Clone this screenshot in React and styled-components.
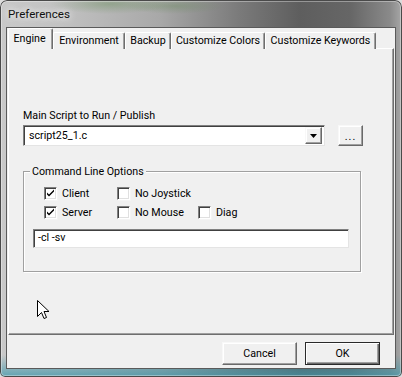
import React from "react";
import styled, { createGlobalStyle } from "styled-components";

const Global = createGlobalStyle`
  html, body { margin: 0; padding: 0; background: #dcdcdc; }
  body { font-family: Roboto, "Noto Sans", sans-serif; font-size: 10.7px; color: #000; }
  * { box-sizing: border-box; }
`;

const Window = styled.div`
  position: relative;
  width: 402px;
  height: 377px;
  padding: 27px 6px 8px 6px;
  display: flex;
  flex-direction: column;
  border-radius: 7px 7px 5px 5px;
  overflow: hidden;
  background:
    radial-gradient(ellipse 60px 10px at 110px 4px, rgba(120, 150, 110, 0.55), rgba(120,150,110,0) 100%),
    radial-gradient(ellipse 50px 8px at 175px 6px, rgba(110, 140, 100, 0.45), rgba(110,140,100,0) 100%),
    linear-gradient(to bottom, rgba(60,150,170,0) 0, rgba(60,150,170,0) 355px, rgba(60,150,170,0.75) 377px),
    linear-gradient(to right, #c9c9c9 0px, #c2c2c2 60px, #a8a8a8 160px, #7a7a7a 240px, #5e5e5e 300px, #666 350px, #8a8a8a 390px, #a8a8a8 402px);
  box-shadow: inset 0 0 0 1px #4a4a4a, inset 0 0 0 2px rgba(255,255,255,0.35);
`;

const TitleBar = styled.div`
  position: absolute;
  left: 8px;
  top: 5px;
  height: 18px;
  line-height: 18px;
  font-size: 11.6px;
  color: #111;
  text-shadow: 0 0 6px rgba(255,255,255,0.9), 0 0 10px rgba(255,255,255,0.7);
`;

const Client = styled.div`
  flex: 1;
  display: flex;
  flex-direction: column;
  background: #f0f0f0;
  border: 1px solid #5a5a5a;
  padding: 0 1px;
`;

const TabStrip = styled.div`
  display: flex;
  align-items: flex-end;
  height: 21px;
  position: relative;
  z-index: 1;
  margin-bottom: -1px;
`;

const Tab = styled.div`
  width: ${p => p.$w}px;
  height: ${p => (p.$active ? 21 : 17)}px;
  line-height: ${p => (p.$active ? 19 : 16)}px;
  text-align: center;
  background: #f0f0f0;
  border-top: 1px solid #fff;
  border-left: 1px solid #fff;
  border-right: 1px solid #6e6e6e;
  border-radius: 2px 2px 0 0;
  box-shadow: inset -1px 0 0 #a0a0a0;
  white-space: nowrap;
  ${p => p.$active && `padding-right: 2px;`}
`;

const Panel = styled.div`
  height: 287px;
  background: #f0f0f0;
  border-top: 1px solid #fff;
  border-left: 1px solid #fff;
  border-right: 1px solid #6e6e6e;
  border-bottom: 1px solid #6e6e6e;
  box-shadow: inset -1px -1px 0 #a0a0a0;
  padding: 59px 0 0 14px;
  display: flex;
  flex-direction: column;
`;

const FieldLabel = styled.div`
  height: 15px;
  line-height: 15px;
  margin-bottom: 2px;
`;

const ComboRow = styled.div`
  display: flex;
  align-items: flex-start;
  gap: 13px;
`;

const Combo = styled.div`
  width: 302px;
  height: 21px;
  background: #fff;
  border-top: 1px solid #808080;
  border-left: 1px solid #808080;
  border-right: 1px solid #e4e4e4;
  border-bottom: 1px solid #e4e4e4;
  box-shadow: inset 1px 1px 0 #404040;
  display: flex;
  align-items: center;
  padding: 1px 2px 1px 5px;
`;

const ComboText = styled.div`
  flex: 1;
  line-height: 17px;
`;

const Raised = styled.div`
  display: flex;
  align-items: center;
  justify-content: center;
  background: #f0f0f0;
  border-top: 1px solid #f8f8f8;
  border-left: 1px solid #f8f8f8;
  border-right: 1px solid #696969;
  border-bottom: 1px solid #696969;
  box-shadow: inset -1px -1px 0 #a0a0a0, inset 1px 1px 0 #fff;
`;

const DropButton = styled(Raised)`
  width: 17px;
  height: 17px;
`;

const BrowseButton = styled(Raised)`
  width: 25px;
  height: 21px;
  padding-top: 2px;
  letter-spacing: 1px;
`;

const Group = styled.div`
  position: relative;
  width: 338px;
  height: 101px;
  margin-top: 25px;
  border: 1px solid #a0a0a0;
  box-shadow: inset 1px 1px 0 #fff, 1px 1px 0 #fff;
  padding: 12px 0 0 9px;
`;

const GroupTitle = styled.span`
  position: absolute;
  left: 6px;
  top: -8px;
  padding: 0 2px;
  line-height: 15px;
  background: #f0f0f0;
`;

const Options = styled.div`
  display: grid;
  grid-template-columns: 73px 81px auto;
  grid-auto-rows: 19px;
  margin-left: 11px;
`;

const Option = styled.label`
  display: flex;
  align-items: center;
  gap: 5px;
  white-space: nowrap;
`;

const Box = styled.span`
  width: 13px;
  height: 13px;
  background: #fff;
  border-top: 1px solid #808080;
  border-left: 1px solid #808080;
  border-right: 1px solid #fff;
  border-bottom: 1px solid #fff;
  box-shadow: inset 1px 1px 0 #404040, inset -1px -1px 0 #e0e0e0, 1px 1px 0 #f4f4f4;
  display: flex;
  align-items: center;
  justify-content: center;
`;

const TextField = styled.div`
  width: 316px;
  height: 19px;
  margin-top: 7px;
  background: #fff;
  border-top: 1px solid #808080;
  border-left: 1px solid #808080;
  border-right: 1px solid #e4e4e4;
  border-bottom: 1px solid #e4e4e4;
  box-shadow: inset 1px 1px 0 #404040;
  padding: 0 4px;
  line-height: 16px;
`;

const Footer = styled.div`
  flex: 1;
  display: flex;
  justify-content: flex-end;
  align-items: flex-start;
  gap: 8px;
  padding: 7px 14px 0 0;
`;

const Button = styled(Raised)`
  width: 75px;
  height: 23px;
  ${p => p.$default && `
    border: 1px solid #2a2a2a;
    box-shadow: inset 1px 1px 0 #fff, inset -1px -1px 0 #696969, inset -2px -2px 0 #a0a0a0;
  `}
`;

const Cursor = styled.svg`
  position: absolute;
  left: 37px;
  top: 300px;
`;

const Check = () => (
  <svg width="9" height="9" viewBox="0 0 9 9">
    <path d="M1 3.5 L3 5.5 L8 0.5 L8 2.5 L3 7.5 L1 5.5 Z" fill="#000" />
  </svg>
);

const CheckOpt = ({ checked, children }) => (
  <Option>
    <Box>{checked && <Check />}</Box>
    {children}
  </Option>
);

const tabs = [
  { label: "Engine", w: 45, active: true },
  { label: "Environment", w: 72 },
  { label: "Backup", w: 46 },
  { label: "Customize Colors", w: 94 },
  { label: "Customize Keywords", w: 111 },
];

export default function App() {
  return (
    <>
      <Global />
      <Window>
        <TitleBar>Preferences</TitleBar>
        <Client>
          <TabStrip>
            {tabs.map(t => (
              <Tab key={t.label} $w={t.w} $active={t.active}>{t.label}</Tab>
            ))}
          </TabStrip>
          <Panel>
            <FieldLabel>Main Script to Run / Publish</FieldLabel>
            <ComboRow>
              <Combo>
                <ComboText>script25_1.c</ComboText>
                <DropButton>
                  <svg width="7" height="4" viewBox="0 0 7 4"><path d="M0 0H7L3.5 4Z" fill="#000" /></svg>
                </DropButton>
              </Combo>
              <BrowseButton>...</BrowseButton>
            </ComboRow>
            <Group>
              <GroupTitle>Command Line Options</GroupTitle>
              <Options>
                <CheckOpt checked>Client</CheckOpt>
                <CheckOpt>No Joystick</CheckOpt>
                <span />
                <CheckOpt checked>Server</CheckOpt>
                <CheckOpt>No Mouse</CheckOpt>
                <CheckOpt>Diag</CheckOpt>
              </Options>
              <TextField>-cl -sv</TextField>
            </Group>
          </Panel>
          <Footer>
            <Button>Cancel</Button>
            <Button $default>OK</Button>
          </Footer>
        </Client>
        <Cursor width="13" height="20" viewBox="0 0 13 20">
          <path d="M0.5 0.5 L0.5 16.5 L4.5 12.5 L7 18.5 L9.5 17.5 L7 11.5 L12 11.5 Z" fill="#fff" stroke="#000" strokeWidth="1" />
        </Cursor>
      </Window>
    </>
  );
}
